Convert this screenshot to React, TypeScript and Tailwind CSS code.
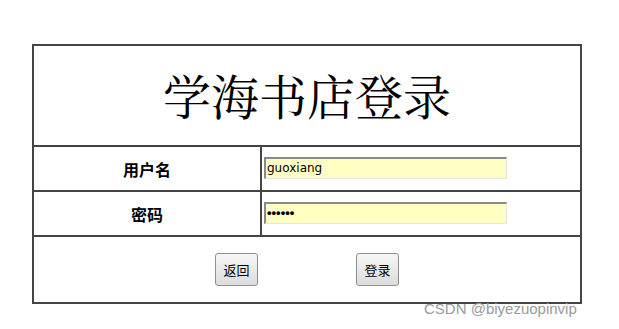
import React from 'react';

const cjk = '"Noto Sans CJK SC", "Liberation Sans", sans-serif';

export default function App() {
  return (
    <div className="w-[619px] h-[329px] bg-white relative overflow-hidden" style={{ fontFamily: cjk }}>
      <div className="pt-[44px] pl-[32px]">
        <table className="w-[550px] border-collapse border-2 border-[#444]">
          <tbody>
            <tr className="h-[101px]">
              <td colSpan={2} className="border-2 border-[#444] text-center">
                <span className="text-[48px] leading-none text-black" style={{ fontFamily: '"Noto Serif CJK SC", "AR PL UMing CN", "Noto Sans CJK SC", serif' }}>
                  学海书店登录
                </span>
              </td>
            </tr>
            <tr className="h-[45px]">
              <td className="w-[228px] border-2 border-[#444] text-center text-[16px] font-bold text-black">用户名</td>
              <td className="border-2 border-[#444] pl-[2px]">
                <div className="w-[243px] h-[22px] -mt-[2px] bg-[#ffffc4] border-t-2 border-l-2 border-[#8a8a8a] border-r border-b border-r-[#e5e5e5] border-b-[#e5e5e5] flex items-center px-[1px] text-[12px] text-black" style={{ fontFamily: '"DejaVu Sans", sans-serif' }}>
                  guoxiang
                </div>
              </td>
            </tr>
            <tr className="h-[45px]">
              <td className="border-2 border-[#444] text-center text-[16px] font-bold text-black">密码</td>
              <td className="border-2 border-[#444] pl-[2px]">
                <div className="w-[243px] h-[22px] -mt-[2px] bg-[#ffffc4] border-t-2 border-l-2 border-[#8a8a8a] border-r border-b border-r-[#e5e5e5] border-b-[#e5e5e5] flex items-center px-[1px] text-[13px] font-bold text-black" style={{ fontFamily: '"Liberation Sans", sans-serif' }}>
                  ••••••
                </div>
              </td>
            </tr>
            <tr className="h-[67px]">
              <td colSpan={2} className="border-2 border-[#444]">
                <div className="flex justify-center gap-[98px]">
                  <button className="w-[43px] h-[33px] rounded-[3px] border border-[#8f8f8f] bg-gradient-to-b from-[#f6f6f6] to-[#dcdcdc] text-[13px] text-black">返回</button>
                  <button className="w-[43px] h-[33px] rounded-[3px] border border-[#8f8f8f] bg-gradient-to-b from-[#f6f6f6] to-[#dcdcdc] text-[13px] text-black">登录</button>
                </div>
              </td>
            </tr>
          </tbody>
        </table>
      </div>
      <div className="absolute left-[424px] top-[301px] text-[15px] text-[#9a9a9a] leading-none" style={{ fontFamily: '"Liberation Sans", sans-serif' }}>
        CSDN @biyezuopinvip
      </div>
    </div>
  );
}
